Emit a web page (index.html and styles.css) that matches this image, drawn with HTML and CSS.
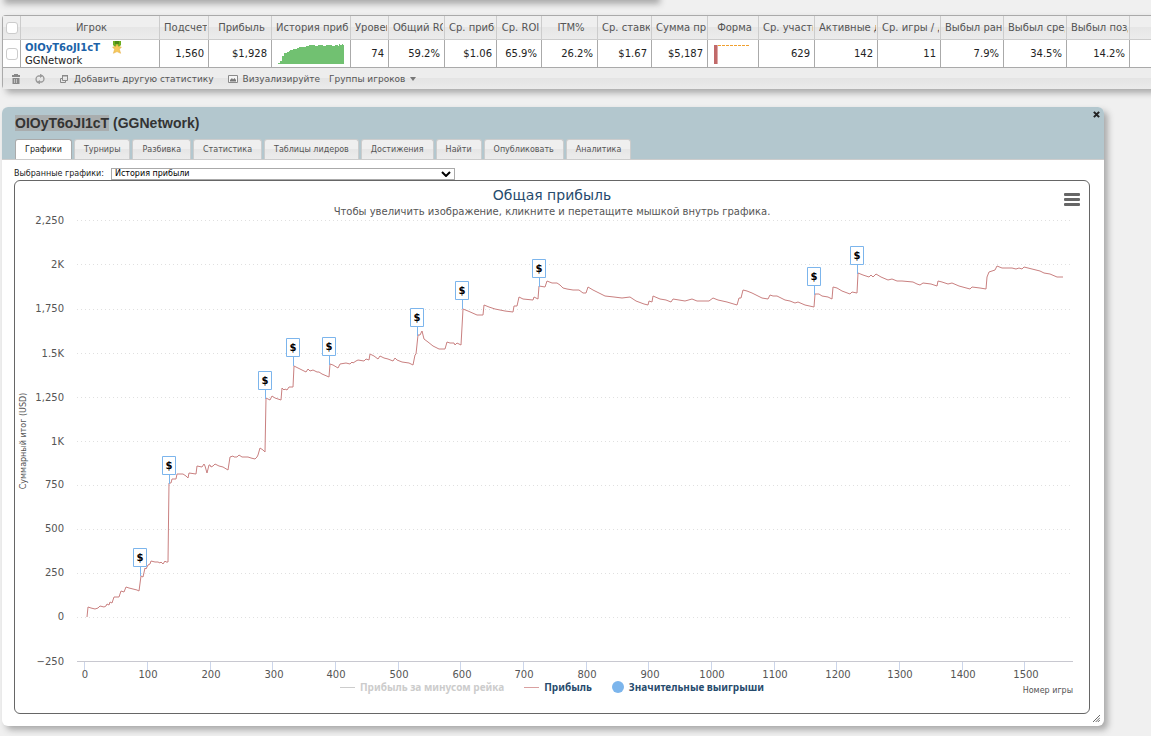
FILE: index.html
```html
<!DOCTYPE html>
<html lang="ru">
<head>
    <meta charset="UTF-8">
    <meta name="viewport" content="width=device-width, initial-scale=1.0">
    <title>OIOyT6oJI1cT (GGNetwork)</title>
    <link rel="stylesheet" href="styles.css">
</head>
<body>
    <!-- Bottom edge of the search panel -->
    <div class="search-panel"></div>

    <!-- Players table -->
    <section class="stats-panel">
        <table class="stats">
            <colgroup>
                <col class="w-check"><col class="w-player"><col class="w-count"><col class="w-profit"><col class="w-history">
                <col class="w-level"><col class="w-md"><col class="w-avg"><col class="w-roi"><col class="w-md">
                <col class="w-stake"><col class="w-md"><col class="w-form"><col class="w-md"><col class="w-lg">
                <col class="w-lg"><col class="w-lg"><col class="w-lg"><col class="w-lg"><col>
            </colgroup>
            <thead>
                <tr>
                    <th class="check"><input type="checkbox" aria-label="Выбрать всех"></th>
                    <th><span>Игрок</span></th>
                    <th><span>Подсчет</span></th>
                    <th><span>Прибыль</span></th>
                    <th><span>История прибыли</span></th>
                    <th><span>Уровень</span></th>
                    <th><span>Общий ROI</span></th>
                    <th><span>Ср. прибыль</span></th>
                    <th><span>Ср. ROI</span></th>
                    <th><span>ITM%</span></th>
                    <th><span>Ср. ставка</span></th>
                    <th><span>Сумма приза</span></th>
                    <th><span>Форма</span></th>
                    <th><span>Ср. участники</span></th>
                    <th><span>Активные дни</span></th>
                    <th><span>Ср. игры / день</span></th>
                    <th><span>Выбыл рано</span></th>
                    <th><span>Выбыл средне</span></th>
                    <th><span>Выбыл поздно</span></th>
                    <th></th>
                </tr>
            </thead>
            <tbody>
                <tr>
                    <td class="check"><input type="checkbox" aria-label="Выбрать OIOyT6oJI1cT"></td>
                    <td class="player">
                        <div class="player-name">
                            <a href="#">OIOyT6oJI1cT</a>
                            <svg class="medal" viewBox="0 0 10 13">
                                <path fill="#6fae22" d="M1 0h8v4L7 6H3L1 4z"/>
                                <path fill="#4c8a17" d="M3 0h4v3H3z"/>
                                <path fill="#f6c95c" stroke="#e2a93a" stroke-width=".5" d="M5 3l1.400 2.600 3 .4-2 2.300 1.200 4L5 10.600 1.400 12.300l1.200-4L.6 6l3-.4z"/>
                            </svg>
                        </div>
                        <div>GGNetwork</div>
                    </td>
                    <td>1,560</td>
                    <td>$1,928</td>
                    <td class="spark">
                        <svg class="history" viewBox="0 0 66 20">
                            <path fill="#71c171" d="M0 20v-1h2v-2h2v-5h2v-3h3v-1h2V7h1V6h3V5h4V4h2V3h7V2h3V1h6v1h3V1h5v1h3V1h6v1h3V1h3v1h1V0h1v1h2V0h1v1h2v19z"/>
                        </svg>
                    </td>
                    <td>74</td>
                    <td>59.2%</td>
                    <td>$1.06</td>
                    <td>65.9%</td>
                    <td>26.2%</td>
                    <td>$1.67</td>
                    <td>$5,187</td>
                    <td class="spark">
                        <svg class="form" viewBox="0 0 36 20">
                            <path fill="#c16a6a" d="M0 1h3v19H0z"/>
                            <path fill="#dda9a9" d="M3 1h1v19H3z"/>
                            <path stroke="#f0a030" stroke-dasharray="3 1" d="M4 1.500h32"/>
                        </svg>
                    </td>
                    <td>629</td>
                    <td>142</td>
                    <td>11</td>
                    <td>7.9%</td>
                    <td>34.5%</td>
                    <td>14.2%</td>
                    <td></td>
                </tr>
            </tbody>
        </table>
        <div class="toolbar">
            <button type="button" aria-label="Удалить">
                <svg class="icon" viewBox="0 0 10 10">
                    <path fill="#888" d="M3 0h4v1h2v2H1V1h2zM1.500 4h7V10h-7z"/>
                    <path stroke="#d8d8d8" stroke-width=".7" d="M3.500 5v4M5.500 5v4"/>
                </svg>
            </button>
            <button type="button" aria-label="Обновить">
                <svg class="icon" viewBox="0 0 10 10">
                    <path fill="none" stroke="#9a9a9a" stroke-width="1.300" d="M5 9H4Q1 8 1 5q0-2 2-3h3M5 1h1q3 1 3 4 0 2-2 3H4"/>
                    <path fill="#9a9a9a" d="M5 0l3 2-3 2zM5 6v4L2 8z"/>
                </svg>
            </button>
            <button type="button">
                <svg class="icon" viewBox="0 0 10 10">
                    <path fill="none" stroke="#8a8a8a" d="M3.500 1.500h5v5h-5zM3 4.500H1.500v4h5V7"/>
                    <path fill="#8a8a8a" d="M3 1h6v1.500H3z"/>
                </svg>
                Добавить другую статистику
            </button>
            <button type="button">
                <svg class="icon" viewBox="0 0 10 10">
                    <path fill="#f5f5f5" stroke="#8a8a8a" d="M.5 1.500h9v7h-9z"/>
                    <path fill="#777" d="M2 7.500V6l2-2 1 1.500L6.500 4 8 6v1.500z"/>
                </svg>
                Визуализируйте
            </button>
            <button type="button" class="groups">Группы игроков <span class="caret"></span></button>
        </div>
    </section>

    <!-- Player window -->
    <section class="window">
        <header class="window-head">
            <button type="button" class="close" aria-label="Закрыть">
                <svg viewBox="0 0 8 8"><path stroke="#222" stroke-width="2.400" d="M1 1l6 6M7 1L1 7"/></svg>
            </button>
            <h1><mark>OIOyT6oJI1cT</mark> (GGNetwork)</h1>
            <nav class="tabs">
                <a href="#" class="active">Графики</a>
                <a href="#">Турниры</a>
                <a href="#">Разбивка</a>
                <a href="#">Статистика</a>
                <a href="#">Таблицы лидеров</a>
                <a href="#">Достижения</a>
                <a href="#">Найти</a>
                <a href="#">Опубликовать</a>
                <a href="#">Аналитика</a>
            </nav>
        </header>

        <div class="window-body">
            <div class="picker">
                <label for="graph">Выбранные графики:</label>
                <span class="select-wrap">
                    <select id="graph">
                        <option>История прибыли</option>
                    </select>
                    <svg viewBox="0 0 10 6"><path fill="none" stroke="#000" stroke-width="2" d="M1 1l4 4 4-4"/></svg>
                </span>
            </div>

            <div class="chart">
                <button type="button" class="menu" aria-label="Меню графика"><span></span><span></span><span></span></button>
                <h2>Общая прибыль</h2>
                <p class="hint">Чтобы увеличить изображение, кликните и перетащите мышкой внутрь графика.</p>

                <svg class="plot" viewBox="15 215 1074 466">
                    <!-- Grid -->
                    <path class="grid" d="M77 220.500H1073M77 264.500H1073M77 309.500H1073M77 353.500H1073M77 397.500H1073M77 441.500H1073M77 485.500H1073M77 529.500H1073M77 573.500H1073M77 617.500H1073"/>
                    <path class="ticks" d="M84.500 662v8M147.500 662v8M210.500 662v8M272.500 662v8M335.500 662v8M398.500 662v8M460.500 662v8M523.500 662v8M586.500 662v8M648.500 662v8M711.500 662v8M774.500 662v8M836.500 662v8M899.500 662v8M962.500 662v8M1024.500 662v8"/>
                    <path class="axis" d="M77 661.500H1073"/>

                    <g class="y-labels">
                        <text x="64" y="224">2,250</text>
                        <text x="64" y="268">2K</text>
                        <text x="64" y="312">1,750</text>
                        <text x="64" y="357">1.5K</text>
                        <text x="64" y="401">1,250</text>
                        <text x="64" y="445">1K</text>
                        <text x="64" y="488">750</text>
                        <text x="64" y="532">500</text>
                        <text x="64" y="576">250</text>
                        <text x="64" y="620">0</text>
                        <text x="64" y="665">−250</text>
                    </g>
                    <g class="x-labels">
                        <text x="85" y="678">0</text>
                        <text x="148" y="678">100</text>
                        <text x="211" y="678">200</text>
                        <text x="274" y="678">300</text>
                        <text x="336" y="678">400</text>
                        <text x="399" y="678">500</text>
                        <text x="462" y="678">600</text>
                        <text x="524" y="678">700</text>
                        <text x="587" y="678">800</text>
                        <text x="650" y="678">900</text>
                        <text x="712" y="678">1000</text>
                        <text x="775" y="678">1100</text>
                        <text x="838" y="678">1200</text>
                        <text x="900" y="678">1300</text>
                        <text x="963" y="678">1400</text>
                        <text x="1026" y="678">1500</text>
                    </g>
                    <text class="axis-title" transform="translate(26 441) rotate(-90)">Суммарный итог (USD)</text>

                    <!-- Profit -->
                    <path class="profit" d="M87 617L88 607 91 608 95 609 98 608 100 606 104 607 106 606 107 604 109 605 110 602 112 603 114 597 119 597 121 591 124 592 126 587 129 588 137 590 139 591 141 576 143 577 145 568 146 569 148 565 150 564 151 561 155 562 158 562 160 563 161 562 163 564 165 561 166 562 168 562 169 483 171 483 172 479 176 479 177 474 183 474 186 476 188 478 189 473 196 474 197 466 202 467 204 464 205 466 207 473 209 465 210 465 211 467 213 466 215 464 219 466 223 467 228 470 230 457 233 456 234 457 237 457 239 455 242 457 248 457 251 458 255 459 257 457 258 455 260 448 263 450 265 452 266 398 270 400 272 396 275 398 281 400 282 388 284 390 285 389 287 390 289 387 291 387 293 387 294 366 300 369 306 372 308 369 310 371 313 370 317 372 319 372 322 374 329 377 330 364 333 365 338 368 340 364 346 363 350 364 352 362 353 363 356 361 358 360 364 361 366 359 369 360 370 354 374 356 378 359 380 356 384 358 388 359 393 361 395 358 397 360 402 362 409 363 413 365 415 355 416 354 418 335 420 335 422 331 424 339 428 342 433 346 439 349 445 349 447 342 450 343 454 343 455 345 457 343 461 345 463 309 468 311 477 315 483 315 484 305 489 307 495 309 505 311 513 312 514 306 517 306 519 297 523 299 533 300 534 297 538 299 539 286 545 287 547 281 552 283 557 283 560 285 563 288 567 289 573 290 579 290 583 293 586 293 588 287 593 290 599 293 605 296 614 297 622 298 630 297 636 301 644 304 648 305 649 301 652 302 653 296 660 299 666 300 671 302 673 299 679 300 685 301 692 299 697 301 705 301 709 301 713 298 718 300 727 302 737 305 739 298 741 298 743 290 747 291 752 293 758 296 762 298 768 299 770 295 773 296 777 296 785 300 790 301 795 303 798 302 805 305 814 307 815 294 819 294 822 296 828 297 832 299 833 287 837 288 842 291 850 294 852 292 857 293 858 273 863 275 869 277 871 275 873 277 876 274 881 277 888 280 892 279 897 281 902 281 913 282 917 284 920 285 923 283 931 284 937 286 938 281 942 282 948 284 952 283 959 286 970 289 972 287 980 288 986 289 987 277 989 272 995 270 997 266 1002 268 1012 268 1016 269 1019 268 1022 269 1024 267 1028 268 1040 271 1044 273 1050 274 1057 277 1063 277"/>

                    <!-- Big wins -->
                    <g class="flag" transform="translate(140 576)"><path class="pole" d="M.5 0v-10"/><path class="box" d="M-6.500-27.500h13v18h-13z"/><text y="-15">$</text></g>
                    <g class="flag" transform="translate(169 484)"><path class="pole" d="M.5 0v-10"/><path class="box" d="M-6.500-27.500h13v18h-13z"/><text y="-15">$</text></g>
                    <g class="flag" transform="translate(265 399)"><path class="pole" d="M.5 0v-10"/><path class="box" d="M-6.500-27.500h13v18h-13z"/><text y="-15">$</text></g>
                    <g class="flag" transform="translate(293 366)"><path class="pole" d="M.5 0v-10"/><path class="box" d="M-6.500-27.500h13v18h-13z"/><text y="-15">$</text></g>
                    <g class="flag" transform="translate(329 365)"><path class="pole" d="M.5 0v-10"/><path class="box" d="M-6.500-27.500h13v18h-13z"/><text y="-15">$</text></g>
                    <g class="flag" transform="translate(417 336)"><path class="pole" d="M.5 0v-10"/><path class="box" d="M-6.500-27.500h13v18h-13z"/><text y="-15">$</text></g>
                    <g class="flag" transform="translate(462 309)"><path class="pole" d="M.5 0v-10"/><path class="box" d="M-6.500-27.500h13v18h-13z"/><text y="-15">$</text></g>
                    <g class="flag" transform="translate(539 287)"><path class="pole" d="M.5 0v-10"/><path class="box" d="M-6.500-27.500h13v18h-13z"/><text y="-15">$</text></g>
                    <g class="flag" transform="translate(814 295)"><path class="pole" d="M.5 0v-10"/><path class="box" d="M-6.500-27.500h13v18h-13z"/><text y="-15">$</text></g>
                    <g class="flag" transform="translate(857 274)"><path class="pole" d="M.5 0v-10"/><path class="box" d="M-6.500-27.500h13v18h-13z"/><text y="-15">$</text></g>
                </svg>

                <div class="chart-foot">
                    <div class="legend">
                        <button type="button" class="off"><span class="line"></span>Прибыль за минусом рейка</button>
                        <button type="button"><span class="line"></span>Прибыль</button>
                        <button type="button"><span class="dot"></span>Значительные выигрыши</button>
                    </div>
                    <span class="x-title">Номер игры</span>
                </div>
            </div>
        </div>

        <svg class="resize" viewBox="0 0 8 8"><path stroke="#555" d="M0 8l8-8M3 8l5-5M5.500 8L8 5.500"/></svg>
    </section>
</body>
</html>
```
FILE: styles.css
```css
* {
    box-sizing: border-box;
}

body {
    min-height: 100vh;
    margin: 0;
    background-color: #f0f0f0;
    color: #222;
    font-family: "DejaVu Sans", Verdana, sans-serif;
    font-size: 10px;
    overflow: hidden;
}

button {
    border: 0;
    padding: 0;
    background: none;
    color: inherit;
    font: inherit;
    cursor: pointer;
}

/* Search panel, only its shadow is in view */
.search-panel {
    width: 57%;
    height: 15px;
    margin-top: -15px;
    box-shadow: 4px 4px 6px #aaa;
}

/* Players table */
.stats-panel {
    margin: 15px -20px 0 2px;
    border: 1px solid #aaa;
    border-bottom: 0;
    border-radius: 4px;
    background-color: #ececec;
    box-shadow: 4px 4px 6px #aaa;
}

.stats {
    width: 100%;
    table-layout: fixed;
    border-collapse: separate;
    border-spacing: 0;
}

.w-check { width: 18px; }
.w-player { width: 139px; }
.w-count { width: 49px; }
.w-profit { width: 63px; }
.w-history { width: 79px; }
.w-level { width: 38px; }
.w-md { width: 56px; }
.w-avg { width: 52px; }
.w-roi { width: 45px; }
.w-stake { width: 54px; }
.w-form { width: 51px; }
.w-lg { width: 63px; }

.stats th {
    height: 24px;
    padding: 0 1px 0 4px;
    border-right: 1px solid #ccc;
    border-bottom: 1px solid #ccc;
    background: linear-gradient(#efefef 50%, #e6e6e6 50%, #ececec);
    color: #555;
    font-weight: normal;
}

.stats th span {
    display: block;
    white-space: nowrap;
    overflow: hidden;
}

.stats td {
    height: 28px;
    padding: 0 4px;
    border-right: 1px solid #aaa;
    border-bottom: 1px solid #aaa;
    background-color: #fff;
    text-align: right;
}

.stats .check {
    padding: 0;
    text-align: center;
}

.stats input {
    appearance: none;
    display: block;
    width: 12px;
    height: 12px;
    margin: 0 auto;
    border: 1px solid #ccc;
    border-radius: 3px;
    background-color: #fff;
}

.stats .player {
    text-align: left;
    line-height: 13px;
}

.player-name {
    display: flex;
    align-items: center;
    gap: 12px;
}

.player-name a {
    color: #1c62a8;
    font-weight: bold;
    text-decoration: none;
}

.medal {
    width: 10px;
    height: 13px;
}

.stats .spark {
    padding: 0 6px;
    text-align: left;
}

.spark svg {
    display: block;
    height: 20px;
}

.history {
    width: 66px;
}

.form {
    width: 36px;
}

.toolbar {
    display: flex;
    align-items: center;
    gap: 14px;
    height: 21px;
    padding: 0 8px;
    background: linear-gradient(#ededed 50%, #e4e4e4 50%, #ebebeb);
    color: #555;
    font-size: 9px;
}

.toolbar button {
    display: flex;
    align-items: center;
    gap: 5px;
}

.icon {
    width: 10px;
    height: 10px;
}

.groups {
    margin-left: -5px;
}

.caret {
    border: 3px solid transparent;
    border-top: 4px solid #777;
    border-bottom: 0;
}

/* Player window */
.window {
    position: relative;
    margin: 18px 47px 0 2px;
    padding-bottom: 12px;
    border-radius: 6px;
    background-color: #fff;
    box-shadow: 4px 4px 6px #aaa;
}

.window-head {
    padding: 8px 13px 0;
    border-bottom: 1px solid #ccc;
    border-radius: 6px 6px 0 0;
    background-color: #b3c7ce;
}

.window-head h1 {
    margin: 0 0 8px;
    color: #333;
    font-family: "Liberation Sans", Arial, sans-serif;
    font-size: 14px;
    line-height: 16px;
}

.window-head mark {
    background-color: #a9adae;
    color: inherit;
}

.close {
    position: absolute;
    top: 4px;
    right: 4px;
    width: 7px;
    height: 7px;
}

.close svg {
    display: block;
}

.tabs {
    display: flex;
    gap: 2px;
    font-size: 8px;
}

.tabs a {
    height: 20px;
    padding: 0 9px;
    border: 1px solid #ccc;
    border-bottom: 0;
    border-radius: 3px 3px 0 0;
    background: linear-gradient(#efefef 50%, #e6e6e6 50%, #ececec);
    color: #555;
    line-height: 19px;
    text-decoration: none;
}

.tabs .active {
    margin-bottom: -1px;
    border-color: #aaa;
    background: #fff;
    color: #222;
}

.window-body {
    padding: 8px 14px 0 12px;
}

.picker {
    display: flex;
    gap: 7px;
    font-size: 8px;
    line-height: 12px;
}

.select-wrap {
    position: relative;
    width: 32%;
}

.select-wrap select {
    appearance: none;
    display: block;
    width: 100%;
    height: 12px;
    padding: 0 3px;
    border: 1px solid #aaa;
    border-radius: 0;
    background-color: #fff;
    color: #000;
    font: inherit;
    line-height: 10px;
}

.select-wrap svg {
    position: absolute;
    top: 3px;
    right: 4px;
    width: 10px;
    height: 6px;
}

/* Chart */
.chart {
    position: relative;
    padding: 5px 0 16px;
    border: 1px solid #666;
    border-radius: 6px;
    text-align: center;
}

.chart h2 {
    margin: 0;
    color: #274b6d;
    font-size: 14px;
    font-weight: normal;
    line-height: 18px;
}

.hint {
    margin: 0;
    height: 11px;
    color: #555;
    line-height: 16px;
}

.menu {
    position: absolute;
    top: 12px;
    right: 9px;
    display: flex;
    flex-direction: column;
    gap: 2px;
    width: 16px;
}

.menu span {
    width: 16px;
    height: 3px;
    border-radius: 1px;
    background-color: #666;
}

.plot {
    display: block;
    width: 100%;
    fill: #555;
    font-size: 10px;
}

.grid {
    stroke: #e0e0e0;
    stroke-dasharray: 1 3;
}

.ticks {
    stroke: #ccd6eb;
}

.axis {
    stroke: #c8c8d0;
}

.y-labels {
    text-anchor: end;
}

.x-labels,
.axis-title,
.flag text {
    text-anchor: middle;
}

.axis-title {
    font-size: 8px;
}

.profit {
    fill: none;
    stroke: #c98080;
    stroke-linejoin: round;
}

.flag .pole {
    stroke: #7cb5ec;
}

.flag .box {
    fill: #fff;
    stroke: #7cb5ec;
}

.flag text {
    fill: #000;
    font-size: 10px;
    font-weight: bold;
}

.chart-foot {
    display: grid;
    grid-template-columns: 1fr auto 1fr;
    height: 16px;
    padding: 0 16px;
}

.legend {
    grid-column: 2;
    display: flex;
    gap: 20px;
    height: 12px;
    color: #274b6d;
    font-family: "Noto Sans", sans-serif;
    font-size: 10px;
    font-weight: bold;
    line-height: 12px;
}

.legend button {
    display: flex;
    align-items: center;
    gap: 5px;
}

.legend .off {
    color: #ccc;
}

.line {
    width: 15px;
    height: 1px;
    background-color: #d9a0a0;
}

.off .line {
    background-color: #ccc;
}

.dot {
    width: 12px;
    height: 12px;
    border-radius: 50%;
    background-color: #7cb5ec;
}

.x-title {
    align-self: end;
    justify-self: end;
    color: #555;
    font-size: 8px;
    line-height: 12px;
}

.resize {
    position: absolute;
    right: 4px;
    bottom: 4px;
    width: 7px;
    height: 7px;
}
```
